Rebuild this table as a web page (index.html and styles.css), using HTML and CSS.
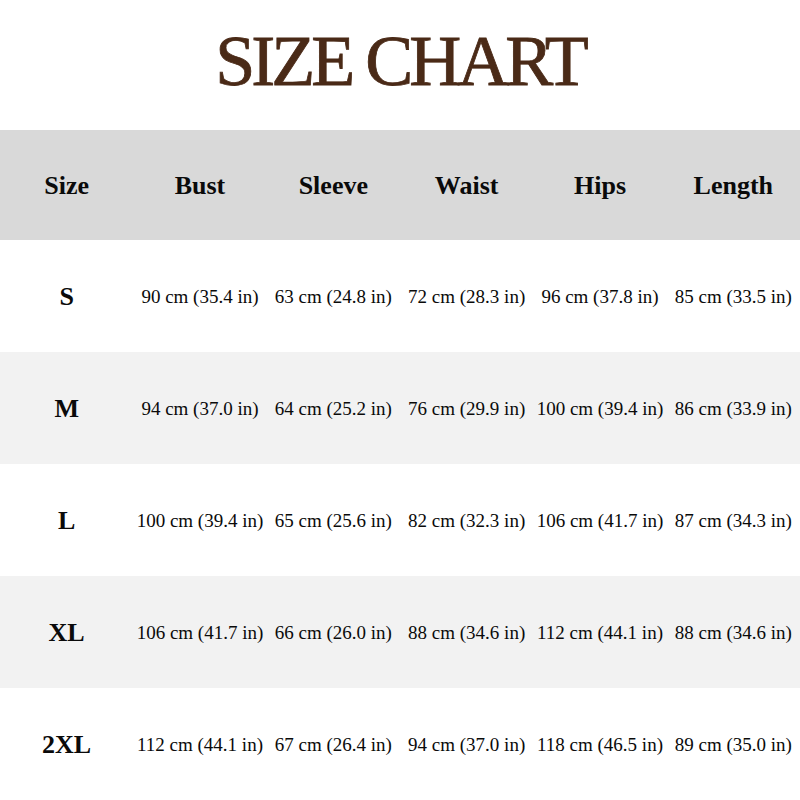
FILE: index.html
```html
<!DOCTYPE html>
<html>
<head>
<meta charset="utf-8">
<link rel="stylesheet" href="styles.css">
</head>
<body>
<div class="page">
  <header class="title-wrap"><h1 class="title">SIZE CHART</h1></header>
  <div class="chart">
    <div class="row head">
      <div class="cell">Size</div><div class="cell">Bust</div><div class="cell">Sleeve</div><div class="cell">Waist</div><div class="cell">Hips</div><div class="cell">Length</div>
    </div>
    <div class="row">
      <div class="cell size">S</div><div class="cell">90 cm (35.4 in)</div><div class="cell">63 cm (24.8 in)</div><div class="cell">72 cm (28.3 in)</div><div class="cell">96 cm (37.8 in)</div><div class="cell">85 cm (33.5 in)</div>
    </div>
    <div class="row alt">
      <div class="cell size">M</div><div class="cell">94 cm (37.0 in)</div><div class="cell">64 cm (25.2 in)</div><div class="cell">76 cm (29.9 in)</div><div class="cell">100 cm (39.4 in)</div><div class="cell">86 cm (33.9 in)</div>
    </div>
    <div class="row">
      <div class="cell size">L</div><div class="cell">100 cm (39.4 in)</div><div class="cell">65 cm (25.6 in)</div><div class="cell">82 cm (32.3 in)</div><div class="cell">106 cm (41.7 in)</div><div class="cell">87 cm (34.3 in)</div>
    </div>
    <div class="row alt">
      <div class="cell size">XL</div><div class="cell">106 cm (41.7 in)</div><div class="cell">66 cm (26.0 in)</div><div class="cell">88 cm (34.6 in)</div><div class="cell">112 cm (44.1 in)</div><div class="cell">88 cm (34.6 in)</div>
    </div>
    <div class="row">
      <div class="cell size">2XL</div><div class="cell">112 cm (44.1 in)</div><div class="cell">67 cm (26.4 in)</div><div class="cell">94 cm (37.0 in)</div><div class="cell">118 cm (46.5 in)</div><div class="cell">89 cm (35.0 in)</div>
    </div>
  </div>
</div>
</body>
</html>
```
FILE: styles.css
```css
html, body {
  margin: 0;
  padding: 0;
  background: #ffffff;
}
.page {
  width: 800px;
  height: 800px;
  overflow: hidden;
  font-family: "Liberation Serif", "Times New Roman", serif;
  color: #0a0a0a;
}
.title-wrap {
  height: 130px;
  display: flex;
  align-items: center;
  justify-content: center;
}
.title {
  margin: 0 0 8px 0;
  font-family: "Liberation Serif", serif;
  font-weight: normal;
  font-size: 72px;
  letter-spacing: -4px;
  color: #4a2a17;
  -webkit-text-stroke: 0.8px #4a2a17;
  line-height: 1;
}
.chart {
  display: flex;
  flex-direction: column;
}
.row {
  display: grid;
  grid-template-columns: repeat(6, 1fr);
  height: 112px;
  align-items: center;
  font-size: 19px;
  padding-top: 2px;
  box-sizing: border-box;
}
.row.head {
  height: 110px;
  background: #d9d9d9;
  font-weight: bold;
  font-size: 26px;
}
.row.alt {
  background: #f2f2f2;
}
.cell {
  text-align: center;
  white-space: nowrap;
}
.cell.size {
  font-weight: bold;
  font-size: 26px;
}
```
